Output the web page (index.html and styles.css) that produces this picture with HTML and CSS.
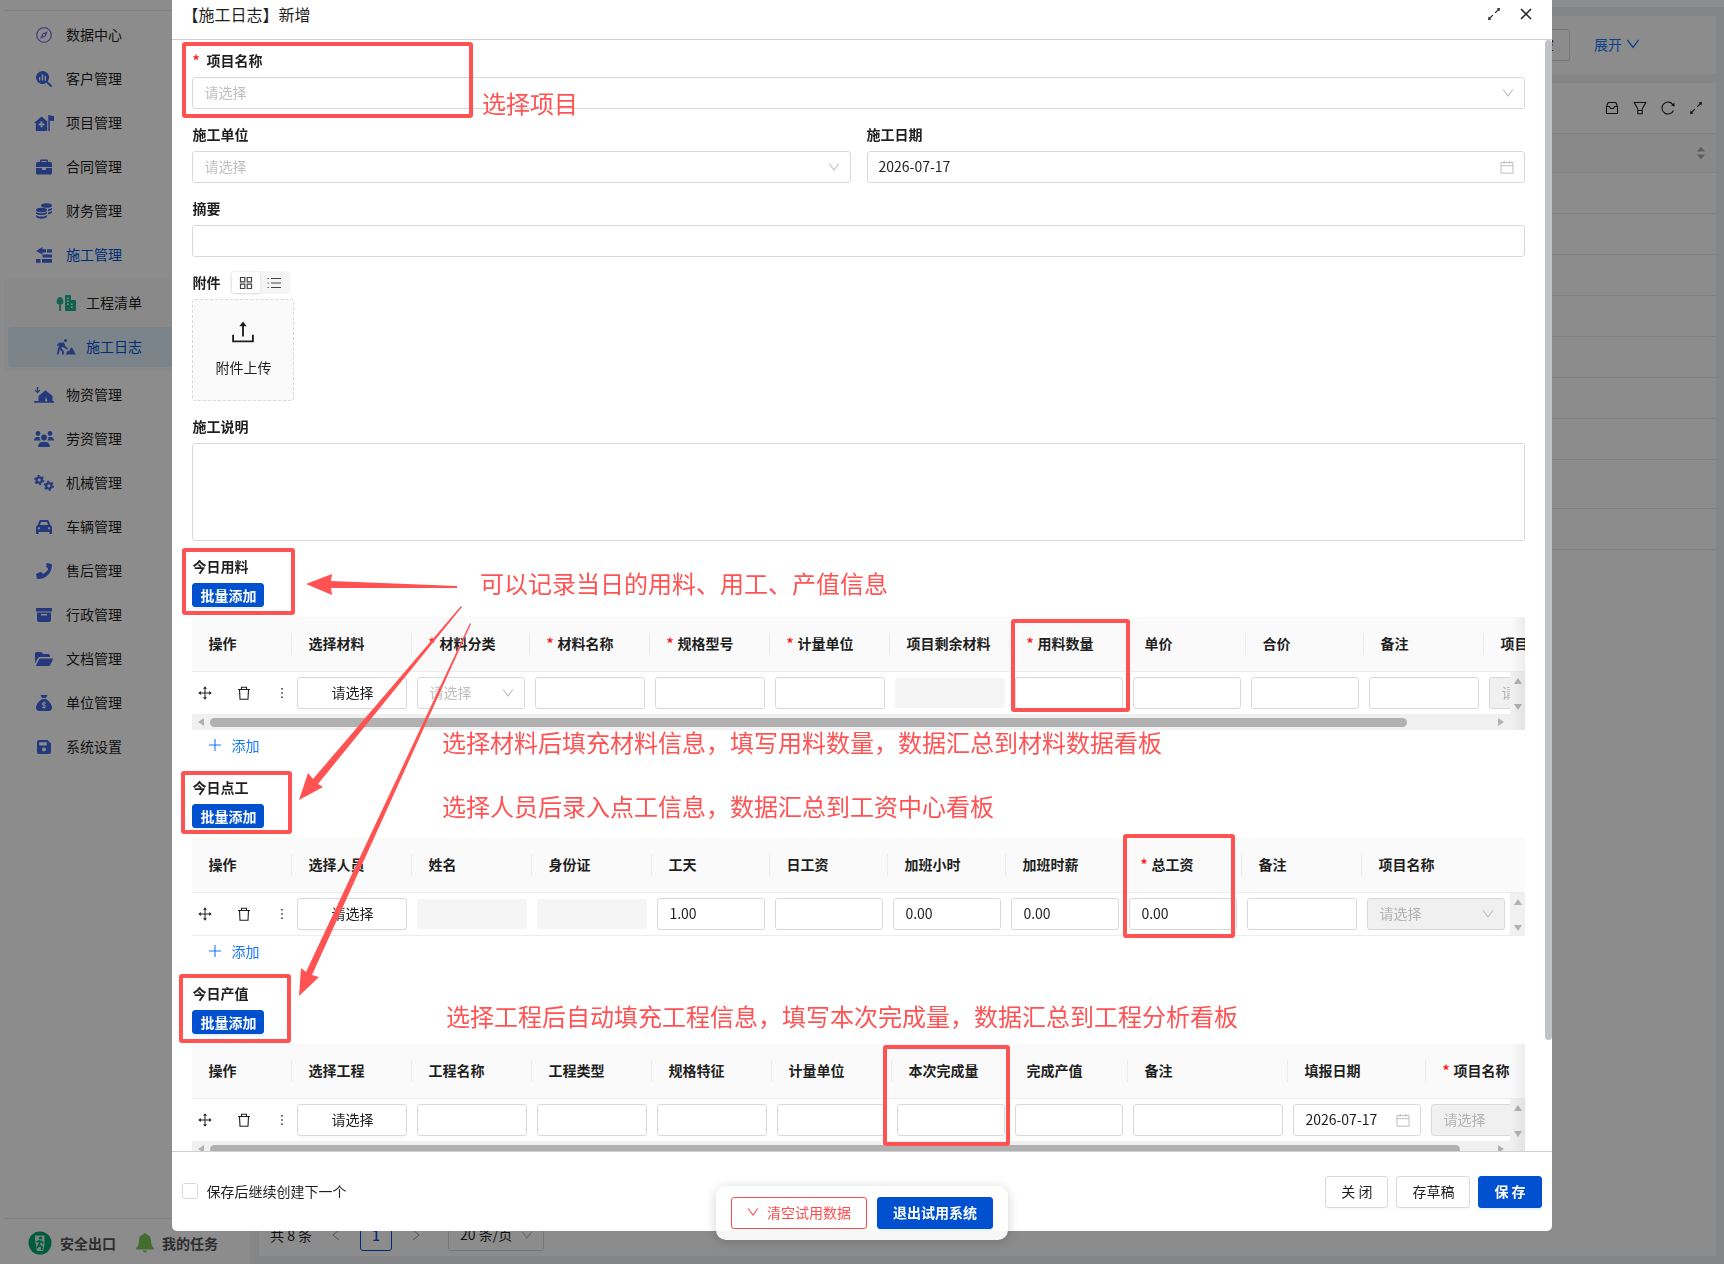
FILE: index.html
```html
<!DOCTYPE html>
<html lang="zh-CN">
<head>
  <meta charset="UTF-8" />
  <meta name="viewport" content="width=device-width, initial-scale=1.0"/>
  <title>【施工日志】新增</title>
  <link rel="stylesheet" href="styles.css">
</head>
<body>
  <!-- icon set -->
  <svg class="sprite" aria-hidden="true">
    <symbol id="i-compass" viewBox="0 0 20 16"><circle cx="10" cy="8" r="7.3" fill="none" stroke="currentColor" stroke-width="1.3"/><path fill="currentColor" fill-rule="evenodd" d="M13.8 4.2l-2.2 5.4-5.4 2.2 2.2-5.4zM10 6.9a1.1 1.1 0 1 0 0 2.2 1.1 1.1 0 0 0 0-2.2z"/></symbol>
    <symbol id="i-search" viewBox="0 0 20 16"><path fill="currentColor" fill-rule="evenodd" d="M8.5 0a6.5 6.5 0 0 1 5.2 10.4l4 3.9a1 1 0 0 1-1.4 1.4l-4-3.9A6.5 6.5 0 1 1 8.500 0zM5 6v3.500h1.300V6zM7.800 3.500v6h1.400v-6zM10.700 5v4.500H12V5z"/></symbol>
    <symbol id="i-house-flag" viewBox="0 0 20 16"><path fill="currentColor" fill-rule="evenodd" d="M7.500 1.500L0 8h1.800v8h11.400V6.300zM6.600 6.500h1.800v2h2v1.800h-2v2H6.600v-2h-2V8.500h2zM14.300 0h1.500v.8c1.500-.7 2.600.6 4.200 0v5c-1.600.6-2.700-.6-4.200 0V16h-1.500z"/></symbol>
    <symbol id="i-briefcase" viewBox="0 0 20 16"><path fill="currentColor" fill-rule="evenodd" d="M6 3V1.700C6 .9 6.600.5 7.300.5h5.400c.8 0 1.300.5 1.300 1.200V3h2.500c.8 0 1.500.7 1.500 1.500V8H2V4.500C2 3.700 2.700 3 3.500 3zm1.500 0h5V2h-5zM2 9h6v1c0 .6.400 1 1 1h2c.6 0 1-.4 1-1V9h6v5c0 .8-.7 1.500-1.500 1.500h-13C2.700 15.500 2 14.800 2 14z"/></symbol>
    <symbol id="i-coins" viewBox="0 0 20 16"><g fill="currentColor"><ellipse cx="12.500" cy="2.500" rx="5.500" ry="2.300"/><ellipse cx="7.500" cy="7" rx="5.500" ry="2.300"/><path d="M2 8.800c2.500 2 8.500 2 11 0v1.600c-1.500 2.200-9.500 2.200-11 0zM2 12c2.500 2 8.500 2 11 0v1.700c-1.500 2.600-9.500 2.600-11 0zM14 6.200c1.600-.2 3-.7 4-1.500v1.600c-.6 1-2 1.600-4 1.900zM14 9.400c1.600-.2 3-.7 4-1.500v1.600c-.6 1-2 1.600-4 1.900z"/></g></symbol>
    <symbol id="i-bricks" viewBox="0 0 20 16"><path fill="currentColor" d="M2 4L8.500 0v2.300H12v3.200H8.500V7.500zM13 2.300h5v3.200h-5zM8.500 7.500H18v3H8.500zM2 12h4.500v3.700H2zM8 12h10v3.700H8z"/></symbol>
    <symbol id="i-city" viewBox="0 0 20 16"><path fill="currentColor" fill-rule="evenodd" d="M4 2c2 0 2.700 1.300 2.700 2.700C8.300 6.200 7.700 9 4.900 9.600V16H3.200V9.600C.2 9-.2 6 1.300 4.700 1.300 3.300 2 2 4 2zM9 1c0-.6.400-1 1-1h4c.6 0 1 .4 1 1v4h4c.6 0 1 .4 1 1v9c0 .6-.4 1-1 1h-9c-.6 0-1-.4-1-1zm2 1.500V4h1.500V2.500zm0 3V7h1.500V5.500zm0 3V10h1.500V8.500zm4 0V10h1.500V8.500zm0 3V13h1.500v-1.500z"/></symbol>
    <symbol id="i-digging" viewBox="0 0 20 16"><path fill="currentColor" d="M9.500 0a1.500 1.500 0 1 1 0 3 1.500 1.500 0 0 1 0-3zM3 3.800L8 3.500l1.700 4.200 2.500 1.700L11 10.500 7.800 8.500l-2-.5-.4 1.500 2.400 2.500V15.500H6v-2.800L3.800 10.300 2.600 15.500H.8l1.500-7L3.800 5.800 1.700 7.500 1 6zM9.500 15.500l2.500-4 1 .7 2.200-3.700 1.500 1 3 6z"/></symbol>
    <symbol id="i-warehouse" viewBox="0 0 20 16"><path fill="currentColor" fill-rule="evenodd" d="M4.200 0v4l1.300-1.200.8.800L3.500 6.500.7 3.600l.8-.8L2.800 4V0zM0 14h4.500V9l7-5.700L18.500 9v5H20v1.800H0zm11 .2h2.500l-1.700-4.500z"/></symbol>
    <symbol id="i-users" viewBox="0 0 20 16"><g fill="currentColor"><circle cx="4" cy="2.500" r="2.400"/><circle cx="16" cy="2.500" r="2.400"/><circle cx="10" cy="6.500" r="2.900"/><path d="M0 9.500C0 7.500 1.200 6 3 6h2.600c0 1.500.3 2.500 1 3.500zM20 9.500C20 7.500 18.800 6 17 6h-2.600c0 1.500-.3 2.500-1 3.500zM4 16c0-3 1.800-5 4-5h4c2.200 0 4 2 4 5z"/></g></symbol>
    <symbol id="i-gears" viewBox="0 0 20 16"><g fill="none" stroke="currentColor"><circle cx="5.200" cy="5" r="2.700" stroke-width="2.200"/><circle cx="5.200" cy="5" r="4.300" stroke-width="1.600" stroke-dasharray="2.200 2.300"/><circle cx="14.800" cy="10.800" r="2.700" stroke-width="2.200"/><circle cx="14.800" cy="10.800" r="4.300" stroke-width="1.600" stroke-dasharray="2.200 2.300"/></g></symbol>
    <symbol id="i-car" viewBox="0 0 20 16"><path fill="currentColor" fill-rule="evenodd" d="M5 2.500C5.300 1.600 6 1 7 1h6c1 0 1.700.6 2 1.500L16.300 6c1 .4 1.700 1.300 1.700 2.400V15h-2.500v-2h-11v2H2V8.400C2 7.300 2.700 6.400 3.700 6zM5.900 6h8.200l-.9-2.500c-.1-.3-.3-.5-.6-.5H7.400c-.3 0-.5.2-.6.5zM5 8.200a1.100 1.100 0 1 0 0 2.200 1.100 1.100 0 0 0 0-2.200zm10 0a1.100 1.100 0 1 0 0 2.200 1.100 1.100 0 0 0 0-2.200z"/></symbol>
    <symbol id="i-phone" viewBox="0 0 20 16"><path fill="currentColor" d="M13.600.1l3.400.8c.6.1 1 .6 1 1.100C18 9.900 11.700 16 4 16c-.6 0-1-.4-1.100-1l-.8-3.300c-.1-.5.200-1 .7-1.200l3.500-1.500c.4-.2.900-.1 1.200.3l1.500 1.800c2.400-1.100 4.200-3 5.300-5.300l-1.700-1.500c-.4-.3-.5-.8-.3-1.200L12.400.7c.2-.5.700-.7 1.200-.6z"/></symbol>
    <symbol id="i-archive" viewBox="0 0 20 16"><path fill="currentColor" fill-rule="evenodd" d="M2 1h16v3.500H2zM3 5.500h14V13c0 1.100-.9 2-2 2H5c-1.100 0-2-.9-2-2zM7 7v1.500h6V7z"/></symbol>
    <symbol id="i-folder" viewBox="0 0 20 16"><path fill="currentColor" d="M1 12.500V2.700C1 1.800 1.700 1 2.700 1h4.600l2 2h5c1 0 1.700.8 1.700 1.700V6H6.300C5.200 6 4.200 6.600 3.700 7.500zM1.800 15l3.300-6.800c.3-.5.800-.8 1.300-.8h11.800c.6 0 1 .6.700 1.200l-2.800 5.600c-.3.500-.8.800-1.400.8z"/></symbol>
    <symbol id="i-money" viewBox="0 0 20 16"><path fill="currentColor" d="M6.500 0h7L12 3H8zM8 4h4c3.500 2.300 6 5.500 6 8.500 0 2.200-1.200 3.500-3.200 3.500H5.200C3.200 16 2 14.700 2 12.500 2 9.500 4.500 6.300 8 4z"/><path d="M12 8.300c-.8-.7-3.800-.9-3.800.7s3.700.8 3.700 2.400-3 1.500-4 .7M10 6.500v7" fill="none" stroke="#fff" stroke-width="1"/></symbol>
    <symbol id="i-save" viewBox="0 0 20 16"><path fill="currentColor" fill-rule="evenodd" d="M3 3c0-1.100.9-2 2-2h8.500L17 4.500V13c0 1.100-.9 2-2 2H5c-1.100 0-2-.9-2-2zm2.200.2v3.300h7.600V3.200zM10 8.500a2 2 0 1 0 0 4 2 2 0 0 0 0-4z"/></symbol>
    <symbol id="i-down" viewBox="0 0 12 12"><path d="M1.200 2.500L6 9l4.800-6.500" fill="none" stroke="currentColor" stroke-width="1.100"/></symbol>
    <symbol id="i-left" viewBox="0 0 12 12"><path d="M9 1L3 6l6 5" fill="none" stroke="currentColor"/></symbol>
    <symbol id="i-right" viewBox="0 0 12 12"><path d="M3 1l6 5-6 5" fill="none" stroke="currentColor"/></symbol>
    <symbol id="i-calendar" viewBox="0 0 14 14"><path d="M1 2.500h12v10.700H1zM1 5.700h12M4.200.7v3M9.800.7v3" fill="none" stroke="currentColor"/></symbol>
    <symbol id="i-expand" viewBox="0 0 14 14"><path d="M8.200 5.800l3-3M5.800 8.200l-3 3" fill="none" stroke="currentColor" stroke-width="1.200"/><path d="M9.600 1.600L13 1l-.6 3.400zM4.400 12.400L1 13l.6-3.400z" fill="currentColor"/></symbol>
    <symbol id="i-close" viewBox="0 0 14 14"><path d="M2 2l10 10M12 2L2 12" fill="none" stroke="currentColor" stroke-width="1.500"/></symbol>
    <symbol id="i-move" viewBox="0 0 14 14"><path d="M7 2v10M2 7h10" fill="none" stroke="currentColor"/><path d="M7 .3l1.900 2.500H5.100zM7 13.700l1.900-2.500H5.100zM.3 7l2.500-1.900v3.800zM13.700 7l-2.500-1.900v3.800z" fill="currentColor"/></symbol>
    <symbol id="i-trash" viewBox="0 0 14 14"><path d="M1 3.500h12M2.500 3.500l.5 9.700h8l.5-9.700M4.500 3.300V1.200h5v2.100" fill="none" stroke="currentColor" stroke-width="1.100"/></symbol>
    <symbol id="i-dots" viewBox="0 0 14 14"><path d="M6.300 2h1.400v1.400H6.300zM6.300 6.300h1.400v1.400H6.300zM6.300 10.600h1.400V12H6.300z" fill="currentColor"/></symbol>
    <symbol id="i-plus" viewBox="0 0 14 14"><path d="M7 1v12M1 7h12" fill="none" stroke="currentColor" stroke-width="1.100"/></symbol>
    <symbol id="i-grid" viewBox="0 0 14 14"><path d="M1.500 1.500h4.300v4.300H1.500zM8.200 1.500h4.300v4.300H8.200zM1.500 8.200h4.300v4.300H1.500zM8.200 8.200h4.300v4.300H8.200z" fill="none" stroke="currentColor" stroke-width="1.200"/></symbol>
    <symbol id="i-list" viewBox="0 0 14 14"><path d="M4 2.500h10M4 7h10M4 11.500h10M.5 2.500h1.300M.5 7h1.300M.5 11.500h1.300" fill="none" stroke="currentColor" stroke-width="1.100"/></symbol>
    <symbol id="i-upload" viewBox="0 0 20 20"><path d="M1 12.500v6h18v-6M10 14V4" fill="none" stroke="currentColor" stroke-width="1.700"/><path d="M10 .5l3.300 4.300H6.700z" fill="currentColor"/></symbol>
    <symbol id="i-inbox" viewBox="0 0 14 14"><path d="M1.500 5.500L3.200 1.500h7.600l1.700 4v7h-11zM1.500 5.500h3l1 2h3l1-2h3" fill="none" stroke="currentColor" stroke-width="1.100"/></symbol>
    <symbol id="i-filter" viewBox="0 0 14 14"><path d="M1.200 1.500h11.600L9.200 8v4.700H4.800V8zM4.800 9.500h4.400" fill="none" stroke="currentColor" stroke-width="1.100"/></symbol>
    <symbol id="i-reload" viewBox="0 0 14 14"><path d="M12.500 9.500A6 6 0 1 1 12 3.700" fill="none" stroke="currentColor" stroke-width="1.100"/><path d="M13.500 1.800v3.600l-3.400-.9z" fill="currentColor"/></symbol>
    <symbol id="i-sort" viewBox="0 0 10 14"><path d="M5 .8L9 5.500H1zM5 13.200L9 8.500H1z" fill="currentColor"/></symbol>
    <symbol id="i-exit" viewBox="0 0 24 24"><circle cx="12" cy="12" r="11.500" fill="#00a870"/><path d="M7 9V4.500h9.500V14l-1.500 6H9z" fill="#d8f5e8"/><circle cx="12.500" cy="7" r="1.600" fill="#00a870"/><path d="M12 9.500l-3.500 1.500M12 9.500l-1 4.500 3 2-.5 3M11 14l-2 3M12.500 10l3 2.500" fill="none" stroke="#00a870" stroke-width="1.700"/></symbol>
    <symbol id="i-bell" viewBox="0 0 18 20"><path d="M9 0c.8 0 1.200.5 1.200 1.200C13.300 1.800 15 4.300 15 7.500c0 3.500.8 5.500 2.800 7.500v1.500H.2V15C2.200 13 3 11 3 7.500c0-3.200 1.700-5.700 4.800-6.300C7.800.5 8.200 0 9 0zM7 17.500h4c0 1.200-.8 2-2 2s-2-.8-2-2z" fill="#7ac756"/></symbol>
  </svg>

  <!-- page behind the dialog -->
  <div class="app">
    <aside class="sidebar">
      <nav class="menu">
        <a href="#"><svg class="purple"><use href="#i-compass"/></svg>数据中心</a>
        <a href="#"><svg><use href="#i-search"/></svg>客户管理</a>
        <a href="#"><svg><use href="#i-house-flag"/></svg>项目管理</a>
        <a href="#"><svg><use href="#i-briefcase"/></svg>合同管理</a>
        <a href="#"><svg><use href="#i-coins"/></svg>财务管理</a>
        <a href="#" class="open"><svg><use href="#i-bricks"/></svg>施工管理</a>
        <div class="submenu">
          <a href="#"><svg class="teal"><use href="#i-city"/></svg>工程清单</a>
          <a href="#" class="open current"><svg><use href="#i-digging"/></svg>施工日志</a>
        </div>
        <a href="#"><svg><use href="#i-warehouse"/></svg>物资管理</a>
        <a href="#"><svg><use href="#i-users"/></svg>劳资管理</a>
        <a href="#"><svg><use href="#i-gears"/></svg>机械管理</a>
        <a href="#"><svg><use href="#i-car"/></svg>车辆管理</a>
        <a href="#"><svg><use href="#i-phone"/></svg>售后管理</a>
        <a href="#"><svg><use href="#i-archive"/></svg>行政管理</a>
        <a href="#"><svg><use href="#i-folder"/></svg>文档管理</a>
        <a href="#"><svg><use href="#i-money"/></svg>单位管理</a>
        <a href="#"><svg><use href="#i-save"/></svg>系统设置</a>
      </nav>
      <div class="side-foot">
        <a href="#"><svg width="24" height="28"><use href="#i-exit"/></svg>安全出口</a>
        <a href="#"><svg width="18" height="22"><use href="#i-bell"/></svg>我的任务</a>
      </div>
    </aside>

    <main class="content">
      <div class="topline"></div>
      <section class="panel search-bar">
        <button class="btn" type="button">清空</button>
        <a href="#" class="expand">展开<svg width="14" height="14"><use href="#i-down"/></svg></a>
      </section>
      <section class="panel list">
        <div class="tools">
          <svg><use href="#i-inbox"/></svg>
          <svg><use href="#i-filter"/></svg>
          <svg><use href="#i-reload"/></svg>
          <svg><use href="#i-expand"/></svg>
        </div>
        <div class="list-head"><svg width="10" height="14"><use href="#i-sort"/></svg></div>
        <div class="list-row"></div>
        <div class="list-row"></div>
        <div class="list-row"></div>
        <div class="list-row"></div>
        <div class="list-row"></div>
        <div class="list-row"></div>
        <div class="list-row"></div>
        <div class="list-row tall"></div>
        <div class="list-row"></div>
        <div class="pager">
          <span>共 8 条</span>
          <svg class="arrow" width="12" height="12"><use href="#i-left"/></svg>
          <button class="page" type="button">1</button>
          <svg class="arrow" width="12" height="12"><use href="#i-right"/></svg>
          <span class="select">
            <select aria-label="每页条数"><option>20 条/页</option></select>
            <svg><use href="#i-down"/></svg>
          </span>
        </div>
      </section>
    </main>
  </div>

  <div class="mask">
    <div class="modal" role="dialog" aria-labelledby="title">
      <header class="modal-head">
        <h1 id="title">【施工日志】新增</h1>
        <button class="icon-btn" type="button" aria-label="全屏"><svg width="14" height="14"><use href="#i-expand"/></svg></button>
        <button class="icon-btn" type="button" aria-label="关闭"><svg width="14" height="14"><use href="#i-close"/></svg></button>
      </header>

      <form class="modal-body">
        <div class="field">
          <label class="required" for="project">项目名称</label>
          <span class="select empty">
            <select id="project"><option>请选择</option></select>
            <svg><use href="#i-down"/></svg>
          </span>
        </div>

        <div class="two-cols">
          <div class="field">
            <label for="company">施工单位</label>
            <span class="select empty">
              <select id="company"><option>请选择</option></select>
              <svg><use href="#i-down"/></svg>
            </span>
          </div>
          <div class="field">
            <label for="day">施工日期</label>
            <span class="select date">
              <input id="day" type="text" value="2026-07-17">
              <svg><use href="#i-calendar"/></svg>
            </span>
          </div>
        </div>

        <div class="field">
          <label for="summary">摘要</label>
          <input id="summary" type="text">
        </div>

        <div class="field">
          <div class="attach-head">
            <label for="upload">附件</label>
            <div class="switch">
              <button class="on" type="button" aria-label="卡片"><svg width="14" height="14"><use href="#i-grid"/></svg></button>
              <button type="button" aria-label="列表"><svg width="14" height="14"><use href="#i-list"/></svg></button>
            </div>
          </div>
          <button class="upload" id="upload" type="button">
            <svg width="22" height="22"><use href="#i-upload"/></svg>
            附件上传
          </button>
        </div>

        <div class="field">
          <label for="note">施工说明</label>
          <textarea id="note"></textarea>
        </div>

        <section class="field">
          <h2>今日用料</h2>
          <button class="btn primary small" type="button">批量添加</button>
          <div class="grid shadow">
            <table>
              <colgroup>
                <col class="w100"><col class="w120"><col class="w118"><col class="w120"><col class="w120"><col class="w120"><col class="w120"><col class="w118"><col class="w118"><col class="w118"><col class="w120"><col class="w148">
              </colgroup>
              <thead>
                <tr>
                  <th>操作</th>
                  <th>选择材料</th>
                  <th class="required">材料分类</th>
                  <th class="required">材料名称</th>
                  <th class="required">规格型号</th>
                  <th class="required">计量单位</th>
                  <th>项目剩余材料</th>
                  <th class="required">用料数量</th>
                  <th>单价</th>
                  <th>合价</th>
                  <th>备注</th>
                  <th>项目</th>
                </tr>
              </thead>
              <tbody>
                <tr>
                  <td><div class="ops"><svg><use href="#i-move"/></svg><svg><use href="#i-trash"/></svg><svg><use href="#i-dots"/></svg></div></td>
                  <td><button class="btn pick" type="button">请选择</button></td>
                  <td><span class="select empty"><select aria-label="材料分类"><option>请选择</option></select><svg><use href="#i-down"/></svg></span></td>
                  <td><input type="text" aria-label="材料名称"></td>
                  <td><input type="text" aria-label="规格型号"></td>
                  <td><input type="text" aria-label="计量单位"></td>
                  <td><input type="text" aria-label="项目剩余材料" readonly></td>
                  <td><input type="text" aria-label="用料数量"></td>
                  <td><input type="text" aria-label="单价"></td>
                  <td><input type="text" aria-label="合价"></td>
                  <td><input type="text" aria-label="备注"></td>
                  <td><span class="select empty"><select aria-label="项目" disabled><option>请选择</option></select><svg><use href="#i-down"/></svg></span></td>
                </tr>
              </tbody>
            </table>
            <div class="vbar"></div>
            <div class="hbar"><i></i><div><b style="width: 93.4%"></b></div><i class="r"></i></div>
          </div>
          <button class="add" type="button"><svg width="14" height="14"><use href="#i-plus"/></svg>添加</button>
        </section>

        <section class="field">
          <h2>今日点工</h2>
          <button class="btn primary small" type="button">批量添加</button>
          <div class="grid line">
            <table>
              <colgroup>
                <col class="w100"><col class="w120"><col class="w120"><col class="w120"><col class="w118"><col class="w118"><col class="w118"><col class="w118"><col class="w118"><col class="w120"><col class="w148"><col>
              </colgroup>
              <thead>
                <tr>
                  <th>操作</th>
                  <th>选择人员</th>
                  <th>姓名</th>
                  <th>身份证</th>
                  <th>工天</th>
                  <th>日工资</th>
                  <th>加班小时</th>
                  <th>加班时薪</th>
                  <th class="required">总工资</th>
                  <th>备注</th>
                  <th colspan="2">项目名称</th>
                </tr>
              </thead>
              <tbody>
                <tr>
                  <td><div class="ops"><svg><use href="#i-move"/></svg><svg><use href="#i-trash"/></svg><svg><use href="#i-dots"/></svg></div></td>
                  <td><button class="btn pick" type="button">请选择</button></td>
                  <td><input type="text" aria-label="姓名" readonly></td>
                  <td><input type="text" aria-label="身份证" readonly></td>
                  <td><input type="text" aria-label="工天" value="1.00"></td>
                  <td><input type="text" aria-label="日工资"></td>
                  <td><input type="text" aria-label="加班小时" value="0.00"></td>
                  <td><input type="text" aria-label="加班时薪" value="0.00"></td>
                  <td><input type="text" aria-label="总工资" value="0.00"></td>
                  <td><input type="text" aria-label="备注"></td>
                  <td><span class="select empty"><select aria-label="项目名称" disabled><option>请选择</option></select><svg><use href="#i-down"/></svg></span></td>
                  <td></td>
                </tr>
              </tbody>
            </table>
            <div class="vbar"></div>
          </div>
          <button class="add" type="button"><svg width="14" height="14"><use href="#i-plus"/></svg>添加</button>
        </section>

        <section class="field">
          <h2>今日产值</h2>
          <button class="btn primary small" type="button">批量添加</button>
          <div class="grid shadow">
            <table>
              <colgroup>
                <col class="w100"><col class="w120"><col class="w120"><col class="w120"><col class="w120"><col class="w120"><col class="w118"><col class="w118"><col class="w160"><col class="w138"><col class="w148">
              </colgroup>
              <thead>
                <tr>
                  <th>操作</th>
                  <th>选择工程</th>
                  <th>工程名称</th>
                  <th>工程类型</th>
                  <th>规格特征</th>
                  <th>计量单位</th>
                  <th>本次完成量</th>
                  <th>完成产值</th>
                  <th>备注</th>
                  <th>填报日期</th>
                  <th class="required">项目名称</th>
                </tr>
              </thead>
              <tbody>
                <tr>
                  <td><div class="ops"><svg><use href="#i-move"/></svg><svg><use href="#i-trash"/></svg><svg><use href="#i-dots"/></svg></div></td>
                  <td><button class="btn pick" type="button">请选择</button></td>
                  <td><input type="text" aria-label="工程名称"></td>
                  <td><input type="text" aria-label="工程类型"></td>
                  <td><input type="text" aria-label="规格特征"></td>
                  <td><input type="text" aria-label="计量单位"></td>
                  <td><input type="text" aria-label="本次完成量"></td>
                  <td><input type="text" aria-label="完成产值"></td>
                  <td><input type="text" aria-label="备注"></td>
                  <td><span class="select date"><input type="text" aria-label="填报日期" value="2026-07-17"><svg><use href="#i-calendar"/></svg></span></td>
                  <td><span class="select empty"><select aria-label="项目名称" disabled><option>请选择</option></select></span></td>
                </tr>
              </tbody>
            </table>
            <div class="vbar"></div>
            <div class="hbar"><i></i><div><b style="width: 97.5%"></b></div><i class="r"></i></div>
          </div>
        </section>
        <div class="page-bar"></div>
      </form>

      <footer class="modal-foot">
        <label><input type="checkbox">保存后继续创建下一个</label>
        <div class="actions">
          <button class="btn" type="button">关 闭</button>
          <button class="btn" type="button">存草稿</button>
          <button class="btn primary" type="button">保 存</button>
        </div>
      </footer>
    </div>
  </div>

  <div class="trial">
    <button class="btn danger" type="button"><svg width="12" height="12"><use href="#i-down"/></svg>清空试用数据</button>
    <button class="btn primary" type="button">退出试用系统</button>
  </div>

  <!-- guide marks drawn over the form -->
  <div class="guide">
    <svg width="1724" height="1264">
      <g class="boxes">
        <rect x="184" y="44" width="287" height="72" rx="1"/>
        <rect x="184" y="550" width="109" height="63" rx="1"/>
        <rect x="183" y="773" width="107" height="59" rx="1"/>
        <rect x="181" y="976" width="108" height="65" rx="1"/>
        <rect x="1013" y="621" width="115" height="89" rx="1"/>
        <rect x="1125" y="836" width="108" height="100" rx="1"/>
        <rect x="885" y="1047" width="123" height="97" rx="1"/>
      </g>
      <path d="M306 584l26-10-1 7 126 5v2l-126 0 1 7z"/>
      <path d="M299 800l9-27 5 6L461 606l1 1L318 784l5 3z"/>
      <path d="M299 996l2-28 5 4L470 623l1 1L312 975l7 2z"/>
    </svg>
    <p class="g1">选择项目</p>
    <p class="g2">可以记录当日的用料、用工、产值信息</p>
    <p class="g3">选择材料后填充材料信息，填写用料数量，数据汇总到材料数据看板</p>
    <p class="g4">选择人员后录入点工信息，数据汇总到工资中心看板</p>
    <p class="g5">选择工程后自动填充工程信息，填写本次完成量，数据汇总到工程分析看板</p>
  </div>
</body>
</html>
```

FILE: styles.css
```css
* {
  box-sizing: border-box;
}

body {
  margin: 0;
  height: 100vh;
  overflow: hidden;
  font-family: "Noto Sans CJK SC", sans-serif;
  font-size: 14px;
  line-height: 22px;
  color: #1f1f1f;
  background: #f0f2f5;
}

a {
  color: inherit;
  text-decoration: none;
}

h1, h2, p {
  margin: 0;
}

button, input, select, textarea {
  font: inherit;
  color: inherit;
}

.sprite {
  position: absolute;
  width: 0;
  height: 0;
}

/* buttons and inputs */
.btn {
  height: 32px;
  padding: 0 15px 2px;
  border: 1px solid #d9d9d9;
  border-radius: 3px;
  background: #fff;
  line-height: 22px;
  box-shadow: 0 2px 0 rgba(0, 0, 0, 0.02);
  white-space: nowrap;
}

.btn.primary {
  border-color: #0050cf;
  background: #0050cf;
  color: #fff;
  font-weight: 700;
  box-shadow: 0 2px 0 rgba(5, 145, 255, 0.1);
}

.btn.small {
  display: block;
  height: 24px;
  padding: 0 7px 2px;
}

.btn.danger {
  display: flex;
  align-items: center;
  gap: 8px;
  border-color: #ff4d4f;
  color: #ff4d4f;
}

input[type="text"], select, textarea {
  display: block;
  width: 100%;
  height: 32px;
  padding: 0 11px 2px;
  border: 1px solid #d9d9d9;
  border-radius: 3px;
  background: #fff;
  appearance: none;
  outline: none;
}

textarea {
  height: 98px;
  resize: none;
}

input[readonly] {
  border-width: 1px 0;
  border-color: #fff;
  background: #f5f5f5;
  background-clip: padding-box;
}

.select {
  position: relative;
  display: block;
}

.select svg {
  position: absolute;
  right: 11px;
  top: 10px;
  width: 12px;
  height: 12px;
  color: #bfbfbf;
  pointer-events: none;
}

.select.date svg {
  top: 9px;
  width: 14px;
  height: 14px;
}

.select.empty select {
  color: #bfbfbf;
}

.select select:disabled {
  background: #f0f0f0;
  color: #b3b3b3;
  opacity: 1;
}

/* sidebar */
.app {
  display: flex;
  height: 100vh;
}

.sidebar {
  display: flex;
  flex-direction: column;
  width: 250px;
  padding-left: 4px;
  background: #fff;
}

.menu {
  flex: 1;
  margin-top: 10px;
  padding-top: 4px;
  border-top: 1px solid #ebebeb;
}

.menu a {
  display: flex;
  align-items: center;
  gap: 12px;
  height: 40px;
  margin: 0 4px 4px;
  padding: 0 0 2px 26px;
  border-radius: 4px;
}

.menu svg {
  width: 20px;
  height: 16px;
  margin-top: 2px;
  color: #4169e1;
}

.menu svg.purple {
  color: #8b6fef;
}

.menu svg.teal {
  color: #20b592;
}

.menu .open {
  color: #0052d9;
}

.submenu {
  display: flow-root;
  margin-bottom: 4px;
  padding-top: 4px;
  background: #fafafa;
}

.submenu a {
  gap: 10px;
  padding-left: 48px;
}

.submenu .current {
  background: #e1f0fc;
}

.side-foot {
  display: flex;
  align-items: center;
  gap: 20px;
  height: 46px;
  padding: 3px 0 0 24px;
  border-top: 1px solid #ebebeb;
  font-weight: 700;
  color: #555;
}

.side-foot a {
  display: flex;
  align-items: center;
  gap: 8px;
}

/* list page */
.content {
  display: flex;
  flex: 1;
  flex-direction: column;
  gap: 9px;
  padding: 0 8px 8px 9px;
}

.topline {
  height: 7px;
  margin: 0 -8px 0 -9px;
  background: #fff;
}

.panel {
  border-radius: 2px;
  background: #fff;
}

.search-bar {
  display: flex;
  align-items: center;
  justify-content: flex-end;
  gap: 24px;
  height: 58px;
  padding-right: 76px;
}

.expand {
  display: flex;
  align-items: center;
  gap: 4px;
  padding-bottom: 2px;
  color: #1677ff;
}

.list {
  display: flex;
  flex: 1;
  flex-direction: column;
}

.tools {
  display: flex;
  align-items: center;
  justify-content: flex-end;
  gap: 14px;
  height: 50px;
  padding-right: 13px;
}

.tools svg {
  width: 14px;
  height: 14px;
}

.list-head {
  display: flex;
  align-items: center;
  justify-content: flex-end;
  height: 40px;
  padding-right: 10px;
  border-top: 1px solid #ebebeb;
  border-bottom: 1px solid #ebebeb;
  background: #fafafa;
  color: #a8a8a8;
}

.list-row {
  height: 41px;
  border-bottom: 1px solid #ebebeb;
}

.list-row.tall {
  height: 49px;
}

.pager {
  display: flex;
  align-items: center;
  gap: 18px;
  margin-top: auto;
  padding: 0 11px 5px;
}

.pager .arrow {
  color: #999;
}

.pager .page {
  width: 32px;
  height: 32px;
  padding: 0;
  border: 1px solid #0052d9;
  border-radius: 3px;
  background: #fff;
  color: #0052d9;
  font-weight: 500;
}

.pager .select {
  width: 96px;
  margin-left: 8px;
}

/* dialog */
.mask {
  position: fixed;
  inset: 0;
  background: rgba(0, 0, 0, 0.45);
}

.modal {
  display: flex;
  flex-direction: column;
  width: 80%;
  height: calc(100vh - 33px);
  margin: 0 auto;
  border-radius: 0 0 5px 5px;
  background: #fff;
}

.modal-head {
  display: flex;
  align-items: center;
  gap: 18px;
  height: 40px;
  padding: 0 19px 11px 10px;
  border-bottom: 1px solid #d0d0d0;
}

.modal-head h1 {
  flex: 1;
  font-size: 16px;
  font-weight: 400;
}

.icon-btn {
  display: flex;
  padding: 0;
  border: 0;
  background: none;
}

.modal-body {
  position: relative;
  flex: 1;
  min-height: 0;
  overflow: hidden;
  padding: 9px 27px 0 20px;
}

.page-bar {
  position: absolute;
  top: 0;
  right: 0;
  width: 7px;
  height: 90%;
  border-radius: 4px;
  background: #c1c3c9;
}

.field {
  margin-bottom: 14px;
}

.field label, .field h2 {
  display: block;
  margin-bottom: 6px;
  font-size: 14px;
  font-weight: 700;
}

.required::before {
  content: "*";
  display: inline-block;
  width: 11px;
  color: #ff1a1a;
}

label.required::before {
  width: 14px;
}

.two-cols {
  display: grid;
  grid-template-columns: 1fr 1fr;
  gap: 16px;
}

.attach-head {
  display: flex;
  gap: 10px;
}

.switch {
  display: flex;
  width: 60px;
  height: 23px;
  padding: 1px 2px;
  border-radius: 3px;
  background: #f5f5f5;
}

.switch button {
  display: flex;
  flex: 1;
  align-items: center;
  justify-content: center;
  padding: 0;
  border: 0;
  border-radius: 2px;
  background: none;
  color: #444;
}

.switch .on {
  background: #fff;
  box-shadow: 0 1px 3px rgba(0, 0, 0, 0.12);
}

.upload {
  display: flex;
  flex-direction: column;
  align-items: center;
  justify-content: center;
  gap: 13px;
  width: 102px;
  height: 102px;
  padding: 0 0 2px;
  border: 1px dashed #d9d9d9;
  border-radius: 3px;
  background: #fafafa;
}

/* detail tables */
.grid {
  position: relative;
  margin-top: 10px;
  overflow: hidden;
}

.grid.line {
  border-bottom: 1px solid #ededed;
}

.grid.shadow::after {
  content: "";
  position: absolute;
  top: 0;
  right: 0;
  bottom: 0;
  width: 14px;
  background: linear-gradient(to left, rgba(0, 0, 0, 0.05), transparent);
}

table {
  width: 100%;
  table-layout: fixed;
  border-collapse: separate;
  border-spacing: 0;
}

th {
  position: relative;
  height: 55px;
  padding: 0 0 2px 16px;
  border-bottom: 1px solid #ededed;
  background: #fafafa;
  text-align: left;
  white-space: nowrap;
}

/* short divider between header cells */
th:not(:last-child)::after {
  content: "";
  position: absolute;
  top: 16px;
  right: 0;
  width: 1px;
  height: 22px;
  background: #ededed;
}

td {
  height: 42px;
  padding: 0 5px;
}

.w100 { width: 100px; }
.w118 { width: 118px; }
.w120 { width: 120px; }
.w138 { width: 138px; }
.w148 { width: 148px; }
.w160 { width: 160px; }

.ops {
  display: flex;
  align-items: center;
  justify-content: space-between;
  margin: 0 -2px 0 1px;
}

.ops svg {
  width: 14px;
  height: 14px;
}

.pick {
  width: 100%;
}

.vbar {
  position: absolute;
  top: 55px;
  right: 0;
  width: 15px;
  height: 42px;
  background: #f0f0f0;
}

.vbar::before, .vbar::after {
  content: "";
  position: absolute;
  left: 4px;
  border: 4px solid transparent;
}

.vbar::before {
  top: 2px;
  border-bottom: 6px solid #b1b1b1;
}

.vbar::after {
  bottom: 0;
  border-top: 6px solid #b1b1b1;
}

.hbar {
  display: flex;
  align-items: center;
  height: 16px;
  padding-right: 15px;
  background: #f0f0f0;
}

.hbar div {
  flex: 1;
}

.hbar b {
  display: block;
  height: 9px;
  border-radius: 5px;
  background: #b1b1b1;
}

.hbar i {
  width: 0;
  margin-right: 6px;
  border: 4px solid transparent;
  border-width: 4px 6px;
  border-right-color: #b1b1b1;
}

.hbar i.r {
  margin: 0 0 0 6px;
  border-right-color: transparent;
  border-left-color: #b1b1b1;
}

.add {
  display: flex;
  align-items: center;
  gap: 9px;
  height: 32px;
  padding: 0 16px 2px;
  border: 0;
  background: none;
  color: #1677ff;
}

.modal-foot {
  display: flex;
  align-items: center;
  justify-content: space-between;
  height: 80px;
  padding: 0 10px;
  border-top: 1px solid #d0d0d0;
}

.modal-foot label {
  display: flex;
  align-items: center;
  gap: 8px;
  padding-bottom: 2px;
}

.modal-foot input {
  width: 16px;
  height: 16px;
  margin: 0;
  border: 1px solid #d9d9d9;
  border-radius: 3px;
  appearance: none;
}

.actions {
  display: flex;
  gap: 8px;
}

.trial {
  position: fixed;
  left: 50%;
  bottom: 24px;
  display: flex;
  gap: 10px;
  padding: 11px 15px;
  border-radius: 10px;
  background: rgba(255, 255, 255, 0.92);
  box-shadow: 0 2px 12px rgba(0, 0, 0, 0.18);
  transform: translateX(-50%);
}

/* guide marks */
.guide {
  position: absolute;
  top: 0;
  left: 0;
  color: #ff5252;
  font-size: 24px;
  line-height: 32px;
  pointer-events: none;
}

.guide svg {
  display: block;
  fill: currentColor;
}

.guide .boxes {
  fill: none;
  stroke: currentColor;
  stroke-width: 4;
}

.guide p {
  position: absolute;
  white-space: nowrap;
}

.g1 { left: 482px; top: 87px; }
.g2 { left: 480px; top: 567px; }
.g3 { left: 442px; top: 726px; }
.g4 { left: 442px; top: 790px; }
.g5 { left: 446px; top: 1000px; }
```
